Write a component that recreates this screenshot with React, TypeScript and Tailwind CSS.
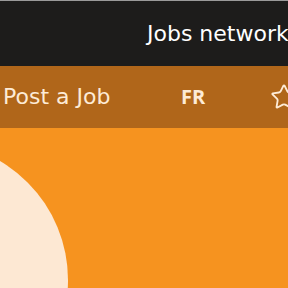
import { Star } from "lucide-react";

const font = { fontFamily: "'DejaVu Sans', 'Open Sans', sans-serif" };

export default function App() {
  return (
    <div className="h-[288px] w-[288px] overflow-hidden bg-[#f6931f]" style={font}>
      <header className="flex h-[66px] items-center overflow-hidden border-t border-[#9a9a9a] bg-[#1d1c1b] pl-[147px]">
        <span className="shrink-0 whitespace-nowrap text-[22px] leading-none text-white">Jobs network</span>
      </header>

      <nav className="flex h-[62px] items-center overflow-hidden whitespace-nowrap bg-[#b0661a] pl-[3px] text-[#fdebd6]">
        <a className="w-[178px] shrink-0 text-[22px] leading-none">Post a Job</a>
        <a
          className="w-[89px] shrink-0 text-[20px] font-bold leading-none"
          style={{ fontFamily: "'Open Sans', sans-serif" }}
        >
          FR
        </a>
        <Star className="shrink-0" size={28} strokeWidth={1.6} />
      </nav>

      <main className="relative h-[160px]">
        <div className="absolute left-[-208px] top-[14px] h-[276px] w-[276px] rounded-full bg-[#fde8d3]" />
      </main>
    </div>
  );
}
